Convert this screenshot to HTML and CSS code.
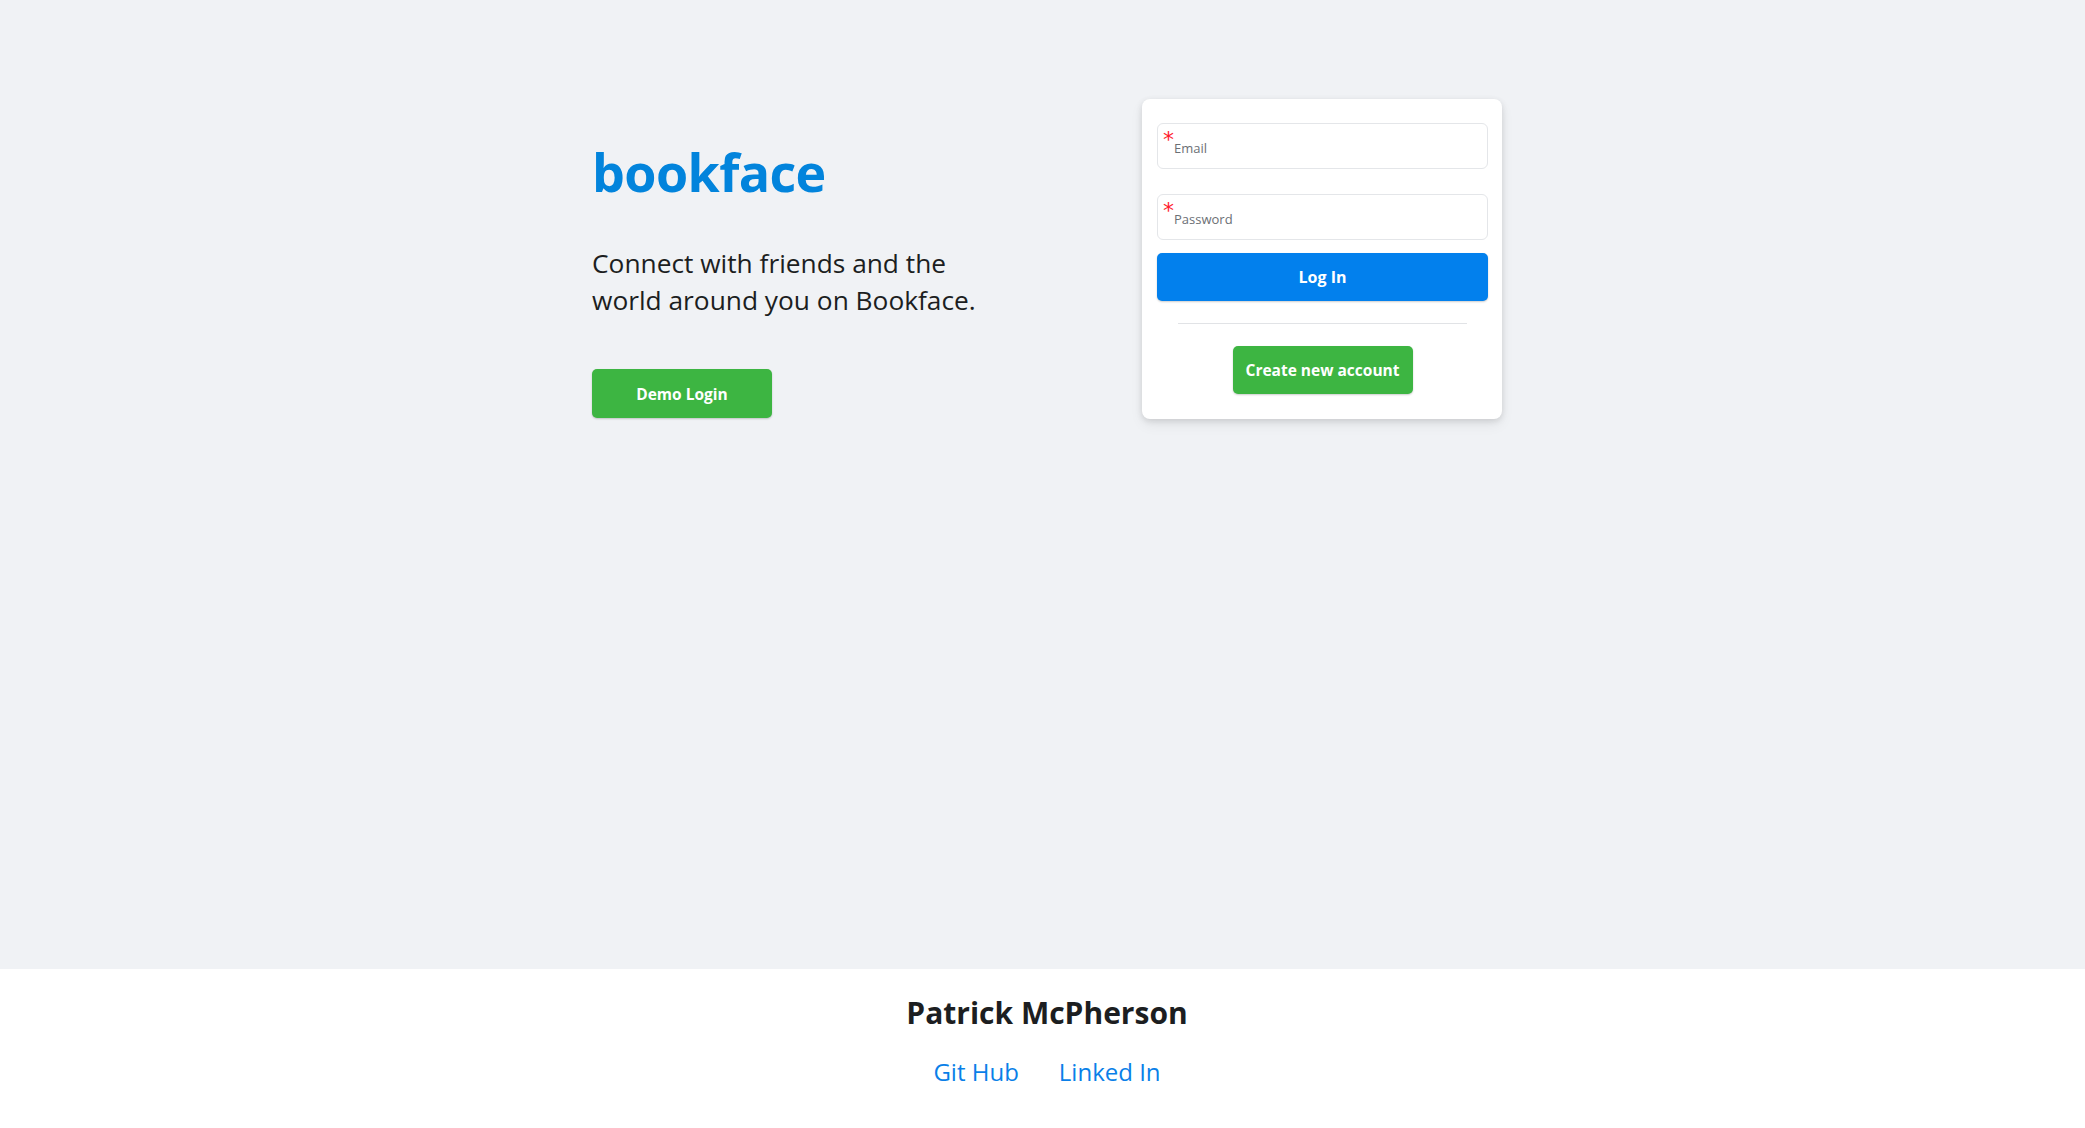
FILE: index.html
```html
<!DOCTYPE html>
<html lang="en">
<head>
<meta charset="utf-8">
<title>Bookface</title>
<link rel="stylesheet" href="styles.css">
</head>
<body>
<div class="page">
  <div class="main">
    <div class="intro">
      <h1 class="logo">bookface</h1>
      <p class="tagline">Connect with friends and the world around you on Bookface.</p>
      <button class="btn btn-green demo">Demo Login</button>
    </div>
    <form class="card">
      <div class="field"><span class="req">*</span><span class="label">Email</span></div>
      <div class="field field-2"><span class="req">*</span><span class="label">Password</span></div>
      <button type="button" class="btn btn-blue login">Log In</button>
      <div class="divider"></div>
      <div class="create-row"><button type="button" class="btn btn-green create">Create new account</button></div>
    </form>
  </div>
</div>
<footer class="footer">
  <div class="name">Patrick McPherson</div>
  <div class="links">
    <a href="#">Git Hub</a>
    <a href="#">Linked In</a>
  </div>
</footer>
</body>
</html>
```
FILE: styles.css
```css
* { box-sizing: border-box; }
html, body { margin: 0; padding: 0; }
body {
  font-family: "Open Sans", "Noto Sans", "Liberation Sans", sans-serif;
  color: #1c1e21;
  background: #ffffff;
}
.page {
  background: #f0f2f5;
  height: 969px;
  display: flex;
  justify-content: center;
  padding-left: 9px;
}
.main {
  width: 910px;
  display: flex;
  justify-content: space-between;
  align-items: flex-start;
}
.intro {
  width: 500px;
  padding-top: 132px;
}
.logo {
  margin: 0;
  font-size: 52px;
  line-height: 80px;
  font-weight: 700;
  color: #0284dc;
  letter-spacing: -0.6px;
}
.tagline {
  margin: 33px 0 0 0;
  width: 420px;
  font-size: 26.3px;
  line-height: 37px;
  font-weight: 400;
  color: #1c1e21;
}
.btn {
  border: none;
  border-radius: 5px;
  color: #ffffff;
  font-family: inherit;
  font-weight: 700;
  font-size: 16px;
  cursor: pointer;
  box-shadow: 0 1px 2px rgba(0,0,0,0.2);
}
.btn-green { background: #3db542; }
.btn-blue { background: #0280ed; }
.demo {
  margin-top: 50px;
  width: 180px;
  height: 49px;
  font-size: 15.5px;
}
.card {
  margin-top: 99px;
  width: 360px;
  background: #ffffff;
  border-radius: 8px;
  box-shadow: 0 2px 6px rgba(0,0,0,0.12), 0 6px 14px rgba(0,0,0,0.06);
  padding: 24px 14px 25px 15px;
  display: flex;
  flex-direction: column;
}
.field {
  height: 46px;
  border: 1px solid #e4e6e9;
  border-radius: 6px;
  padding: 5px 0 0 5px;
  display: flex;
  align-items: flex-start;
}
.field-2 { margin-top: 25px; }
.req {
  color: #ff1a2e;
  font-size: 22px;
  line-height: 22px;
  font-family: "DejaVu Sans", sans-serif;
}
.label {
  margin-top: 11px;
  margin-left: 0;
  font-size: 13px;
  line-height: 16px;
  color: #6b6f75;
}
.login {
  margin-top: 13px;
  height: 48px;
  width: 100%;
  font-size: 16px;
}
.divider {
  margin: 22px 21px 0 21px;
  height: 1px;
  background: #e1e3e6;
}
.create-row {
  margin-top: 22px;
  display: flex;
  justify-content: center;
}
.create {
  width: 180px;
  height: 48px;
  font-size: 15.5px;
}
.footer {
  height: 159px;
  background: #ffffff;
  display: flex;
  flex-direction: column;
  align-items: center;
  padding-top: 22px;
  padding-left: 9px;
}
.name {
  font-size: 30px;
  line-height: 44px;
  font-weight: 700;
  color: #1c1e21;
}
.links {
  margin-top: 21px;
  display: flex;
  gap: 40px;
}
.links a {
  font-size: 24px;
  line-height: 32px;
  color: #0a7fe8;
  text-decoration: none;
}
```
